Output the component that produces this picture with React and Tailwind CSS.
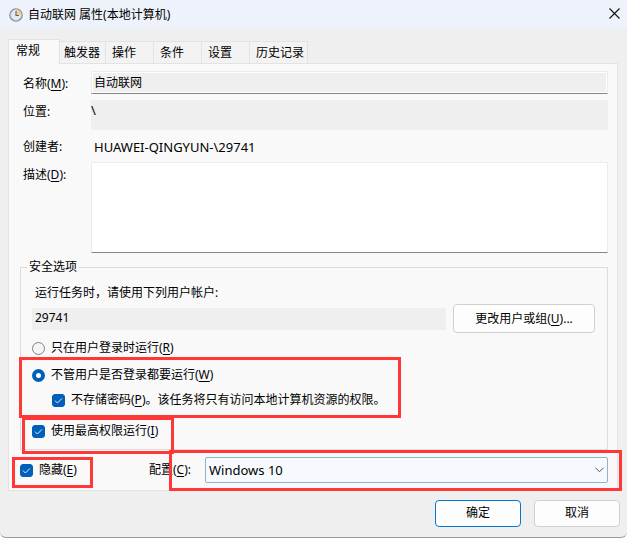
import { useState } from "react";

const tabs = [
    { name: "触发器", width: "w-[46px] pl-1" },
    { name: "操作", width: "w-12 pl-[6px]" },
    { name: "条件", width: "w-12 pl-[6px]" },
    { name: "设置", width: "w-12 pl-[6px]" },
    { name: "历史记录", width: "w-[58px] pl-[6px]" },
];

const Key = ({ children }) => <span className="underline underline-offset-2">{children}</span>;

// Red marker frame around the options that have to be changed
const Mark = ({ className }) => (
    <span className={`pointer-events-none absolute z-10 border-3 border-[#ff3737] ${className}`} />
);

const ClockIcon = () => (
    <svg width="14" height="14" viewBox="0 0 14 14" fill="none">
        <circle cx="7" cy="7" r="6.1" fill="#dcebf5" stroke="#8b8c8e" strokeWidth="1.4" />
        <path d="M7 1.6A5.4 5.4 0 0 1 12.4 7H7Z" fill="#f8cf83" />
        <circle cx="7" cy="7" r="5.3" stroke="#c9ced3" strokeWidth="0.6" />
        <path d="M7 3v4.5h3" stroke="#56657a" strokeWidth="1.1" />
    </svg>
);

function Check({ id, defaultChecked }) {
    return (
        <span className="grid shrink-0">
            <input
                id={id}
                type="checkbox"
                defaultChecked={defaultChecked}
                className="peer col-start-1 row-start-1 size-[13px] appearance-none rounded-[3px] border border-[#868686] bg-white checked:border-[#005fb8] checked:bg-[#005fb8]"
            />
            <svg
                className="pointer-events-none col-start-1 row-start-1 hidden peer-checked:block"
                width="13"
                height="13"
                viewBox="0 0 13 13"
                fill="none"
            >
                <path d="M3 6.6 5.4 9 10 4.4" stroke="#e4eef8" strokeWidth="1" />
            </svg>
        </span>
    );
}

function Radio({ id, value, current, onChange }) {
    return (
        <input
            id={id}
            type="radio"
            name="logon"
            value={value}
            checked={current === value}
            onChange={() => onChange(value)}
            className="size-[13px] shrink-0 appearance-none rounded-full border border-[#808080] bg-[#f5f5f5] checked:border-4 checked:border-[#005fb8] checked:bg-white"
        />
    );
}

export default function App() {
    const [logon, setLogon] = useState("always");

    return (
        <div className="flex min-h-screen flex-col rounded-b-md border-b border-[#9a9a9a] bg-[#efefef] font-['Noto_Sans','Noto_Sans_CJK_SC',sans-serif] text-[12px] leading-4 text-black">
            {/* Title bar */}
            <header className="flex h-[29px] items-center bg-[#eef3fb] pr-[7px] pl-[9px]">
                <ClockIcon />
                <h1 className="ml-[5px] flex-1">自动联网 属性(本地计算机)</h1>
                <button aria-label="关闭" className="pb-[3px]">
                    <svg width="11" height="11" viewBox="0 0 11 11" stroke="#111" strokeWidth="1.1">
                        <path d="M.5.5l10 10M10.5.5l-10 10" />
                    </svg>
                </button>
            </header>

            <main className="pt-[10px] pr-[9px] pl-2">
                {/* Tabs */}
                <nav className="flex items-end">
                    <button className="relative -mb-px h-[25px] w-[52px] border border-b-0 border-[#e3e3e3] bg-[#f9f9f9] pb-[2px] pl-[7px] text-left">
                        常规
                    </button>
                    {tabs.map((tab) => (
                        <button
                            key={tab.name}
                            className={`h-[22px] border-t border-r border-[#e3e3e3] bg-[#f3f3f3] text-left ${tab.width}`}
                        >
                            {tab.name}
                        </button>
                    ))}
                </nav>

                <section className="border border-[#e3e3e3] bg-[#f9f9f9] pt-[7px] pr-[9px] pb-[7px] pl-[11px]">
                    {/* General data */}
                    <div className="grid grid-cols-[68px_1fr] pl-[3px]">
                        <label htmlFor="name" className="pt-[5px]">
                            名称(<Key>M</Key>):
                        </label>
                        <input
                            id="name"
                            readOnly
                            defaultValue="自动联网"
                            className="h-[23px] w-full border border-[#ececec] border-b-[#868686] bg-[#efefef] px-[2px] pb-[2px] outline-1 -outline-offset-2 outline-white"
                        />

                        <span className="pt-[10px]">位置:</span>
                        <div className="mt-[6px] h-[30px] bg-[#efefef] pt-[2px] text-[13px]">\</div>

                        <span className="flex h-8 items-center pt-[2px]">创建者:</span>
                        <span className="flex h-8 items-center pt-[2px] pl-[3px] text-[13px]">
                            HUAWEI-QINGYUN-\29741
                        </span>

                        <label htmlFor="description" className="pt-[5px]">
                            描述(<Key>D</Key>):
                        </label>
                        <textarea
                            id="description"
                            className="block h-[91px] w-full resize-none border border-[#ececec] border-b-[#868686] bg-white p-1"
                        />
                    </div>

                    {/* Security options */}
                    <fieldset className="mt-[6px] border border-[#dcdcdc]">
                        <legend className="ml-[6px] px-[2px]">安全选项</legend>
                        <div className="pt-[10px] pr-3 pb-[10px] pl-[11px]">
                            <label htmlFor="account" className="block pl-[3px]">
                                运行任务时，请使用下列用户帐户:
                            </label>
                            <div className="mt-[3px] flex items-center gap-[7px]">
                                <input
                                    id="account"
                                    readOnly
                                    defaultValue="29741"
                                    className="h-[22px] min-w-0 flex-1 bg-[#efefef] px-[3px] pb-[2px]"
                                />
                                <button className="h-[29px] w-[142px] rounded border border-[#d0d0d0] bg-[#fdfdfd]">
                                    更改用户或组(<Key>U</Key>)...
                                </button>
                            </div>

                            <div className="mt-[7px] flex items-center gap-[6px]">
                                <Radio id="logged" value="logged" current={logon} onChange={setLogon} />
                                <label htmlFor="logged">
                                    只在用户登录时运行(<Key>R</Key>)
                                </label>
                            </div>

                            <div className="relative mt-[11px] w-fit">
                                <Mark className="-top-[10px] -right-4 -bottom-[10px] -left-[13px]" />
                                <div className="flex items-center gap-[6px]">
                                    <Radio id="always" value="always" current={logon} onChange={setLogon} />
                                    <label htmlFor="always">
                                        不管用户是否登录都要运行(<Key>W</Key>)
                                    </label>
                                </div>
                                <div className="mt-[9px] flex items-center gap-[6px] pl-5">
                                    <Check id="nopass" defaultChecked />
                                    <label htmlFor="nopass">
                                        不存储密码(<Key>P</Key>)。该任务将只有访问本地计算机资源的权限。
                                    </label>
                                </div>
                            </div>

                            <div className="relative mt-[15px] flex w-fit items-center gap-[6px]">
                                <Mark className="-top-[6px] -right-4 -bottom-[15px] -left-[10px]" />
                                <Check id="highest" defaultChecked />
                                <label htmlFor="highest">
                                    使用最高权限运行(<Key>I</Key>)
                                </label>
                            </div>
                        </div>
                    </fieldset>

                    <div className="mt-[7px] flex items-center">
                        <div className="relative flex w-[129px] items-center gap-[6px]">
                            <Mark className="-top-[5px] -bottom-[10px] -left-2 w-[81px]" />
                            <Check id="hidden" defaultChecked />
                            <label htmlFor="hidden">
                                隐藏(<Key>E</Key>)
                            </label>
                        </div>
                        <label htmlFor="configure" className="w-14">
                            配置(<Key>C</Key>):
                        </label>
                        <div className="relative grid flex-1 items-center">
                            <Mark className="-top-[7px] -right-[14px] -bottom-2 -left-9" />
                            <select
                                id="configure"
                                className="col-start-1 row-start-1 h-[26px] w-full appearance-none rounded-[2px] border border-[#8fb4d2] bg-[#f6fafe] px-[3px] text-[13px]"
                            >
                                <option>Windows 10</option>
                            </select>
                            <svg
                                className="pointer-events-none col-start-1 row-start-1 mr-1 justify-self-end"
                                width="9"
                                height="6"
                                viewBox="0 0 9 6"
                                fill="none"
                                stroke="#555"
                            >
                                <path d="M.5.8l4 4 4-4" />
                            </svg>
                        </div>
                    </div>
                </section>
            </main>

            <footer className="flex justify-end gap-[13px] pt-[9px] pr-[7px] pb-[10px]">
                <button className="h-[27px] w-[86px] rounded border border-[#0078d4] bg-[#fdfdfd] pb-[2px]">确定</button>
                <button className="h-[27px] w-[86px] rounded border border-[#d0d0d0] bg-[#fdfdfd] pb-[2px]">取消</button>
            </footer>
        </div>
    );
}
